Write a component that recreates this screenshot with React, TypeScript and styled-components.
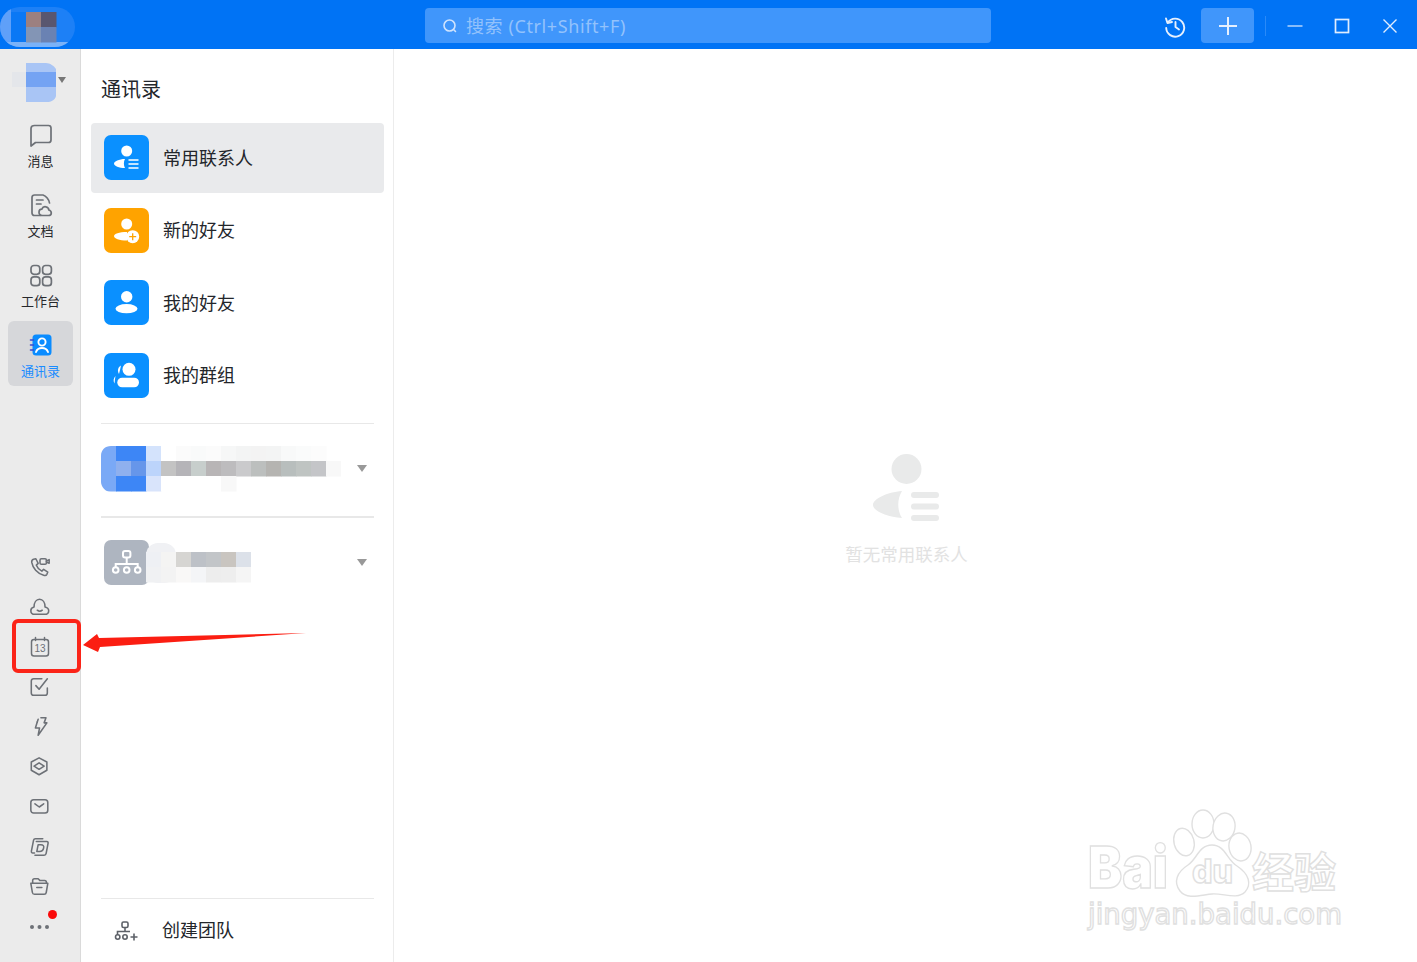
import React from 'react';
import styled, {createGlobalStyle} from 'styled-components';

const BLUE = '#0073f5';
const BLUE_SOFT = '#4096fb';
const RAIL_BG = '#ebebeb';
const LINE = '#e8e8e8';
const ICON = '#6d7177';
const TILE_BLUE = '#0a90ff';

const GlobalStyle = createGlobalStyle`
  html, body {
    margin: 0;
    padding: 0;
    background: #fff;
  }
  body {
    font-family: "Noto Sans", "Noto Sans CJK SC", sans-serif;
    color: #23262b;
  }
  * {
    box-sizing: border-box;
  }
`;

const Page = styled.div`
  position: relative;
  width: 1417px;
  height: 962px;
  overflow: hidden;
  display: flex;
  flex-direction: column;
`;

const TitleBar = styled.header`
  flex: none;
  height: 49px;
  background: ${BLUE};
  display: flex;
  align-items: flex-start;
  padding-right: 4px;
`;

const LogoSlot = styled.div`
  width: 425px;
  height: 49px;
  display: flex;
`;

const Search = styled.div`
  width: 566px;
  height: 35px;
  margin-top: 8px;
  border-radius: 4px;
  background: ${BLUE_SOFT};
  display: flex;
  align-items: center;
  gap: 7px;
  padding-left: 16px;
  color: #93c2fb;
  font-size: 18px;
  letter-spacing: 0.6px;
  white-space: nowrap;
`;

const SearchHint = styled.span`
  margin-top: -2px;
`;

const Actions = styled.div`
  margin: 8px 0 0 auto;
  display: flex;
  align-items: center;
`;

const ToolButton = styled.button<{$wide?: boolean}>`
  border: 0;
  padding: 0;
  height: 35px;
  width: ${(p) => (p.$wide ? '53px' : '28px')};
  margin-left: ${(p) => (p.$wide ? '12px' : '0')};
  border-radius: 4px;
  background: ${(p) => (p.$wide ? BLUE_SOFT : 'transparent')};
  display: flex;
  align-items: center;
  justify-content: center;
`;

const BarDivider = styled.span`
  width: 1px;
  height: 20px;
  margin: 0 5px 0 11px;
  background: #2a8af8;
`;

const WindowButtons = styled.div`
  display: flex;
  gap: 0.5px;
`;

const WindowButton = styled.button`
  border: 0;
  padding: 0;
  width: 47px;
  height: 35px;
  background: transparent;
  display: flex;
  align-items: center;
  justify-content: center;
`;

const Body = styled.div`
  flex: 1;
  min-height: 0;
  display: flex;
`;

const Rail = styled.nav`
  flex: none;
  width: 81px;
  background: ${RAIL_BG};
  border-right: 1px solid #dadada;
  display: flex;
  flex-direction: column;
  padding: 14px 0 15px;
`;

const RailAvatar = styled.div`
  height: 39px;
  margin: 0 0 9px 12px;
  display: flex;
`;

const RailTabs = styled.div`
  display: flex;
  flex-direction: column;
  gap: 5px;
`;

const RailTab = styled.div<{$active?: boolean}>`
  width: 65px;
  height: 65px;
  margin-left: 8px;
  border-radius: 6px;
  background: ${(p) => (p.$active ? '#d6d7da' : 'transparent')};
  color: ${(p) => (p.$active ? '#1a8cff' : '#26282c')};
  display: flex;
  flex-direction: column;
  align-items: center;
  padding-top: 12px;
  font-size: 13px;
  line-height: 18px;
  gap: 5px;
`;

const RailTools = styled.div`
  margin-top: auto;
  display: flex;
  flex-direction: column;
`;

const RailTool = styled.div`
  position: relative;
  height: 40px;
  display: flex;
  align-items: center;
  justify-content: center;
`;

const RedDot = styled.span`
  position: absolute;
  top: 3px;
  left: 48px;
  width: 9px;
  height: 9px;
  border-radius: 50%;
  background: #fa0a0a;
`;

const Panel = styled.aside`
  flex: none;
  width: 313px;
  border-right: 1px solid #ececec;
  padding: 27px 9px 0 10px;
  display: flex;
  flex-direction: column;
`;

const PanelTitle = styled.h1`
  margin: 0 0 19px 10px;
  font-size: 20px;
  font-weight: 400;
  line-height: 28px;
`;

const ContactList = styled.div`
  display: flex;
  flex-direction: column;
  gap: 2.5px;
  padding-bottom: 12.5px;
`;

const ContactRow = styled.div<{$active?: boolean}>`
  height: 70px;
  border-radius: 4px;
  padding-left: 13px;
  background: ${(p) => (p.$active ? '#e9eaec' : 'transparent')};
  display: flex;
  align-items: center;
  gap: 14px;
  font-size: 18px;
`;

const RowLabel = styled.span`
  margin-top: -3px;
`;

const Tile = styled.div<{$color: string}>`
  width: 45px;
  height: 45px;
  margin-top: -0.5px;
  border-radius: 7px;
  background: ${(p) => p.$color};
  display: flex;
`;

const Divider = styled.div<{$thick?: boolean}>`
  height: ${(p) => (p.$thick ? '2px' : '1px')};
  margin: 0 0 0 10px;
  width: 273px;
  background: ${LINE};
`;

const TeamRow = styled.div<{$top: number; $bottom: number}>`
  display: flex;
  align-items: center;
  justify-content: space-between;
  padding: ${(p) => p.$top}px 17px ${(p) => p.$bottom}px 10px;
`;

const TeamName = styled.div`
  display: flex;
  height: 45px;
`;

const GreyTile = styled(Tile)`
  margin-left: 3px;
  margin-top: 0;
  flex: none;
`;

const OrgName = styled.svg`
  margin-left: -3px;
`;

const Caret = styled.span`
  width: 0;
  height: 0;
  border-left: 5.5px solid transparent;
  border-right: 5.5px solid transparent;
  border-top: 7px solid #999;
`;

const PanelFooter = styled.div`
  margin-top: auto;
`;

const CreateTeam = styled.div`
  height: 63px;
  padding: 0 0 0 23px;
  display: flex;
  align-items: center;
  gap: 24px;
  font-size: 18px;
`;

const Main = styled.main`
  flex: 1;
  display: flex;
  flex-direction: column;
  align-items: center;
  padding: 405px 0 0 2px;
`;

const EmptyText = styled.div`
  margin-top: 20px;
  font-size: 17.5px;
  line-height: 24px;
  color: #e2e2e2;
`;

const Annotation = styled.div`
  position: absolute;
  left: 12px;
  top: 619px;
  width: 69px;
  height: 54px;
  border: 4px solid #fb2418;
  border-radius: 6px;
`;

const ArrowMark = styled.svg`
  position: absolute;
  left: 80px;
  top: 630px;
`;

const Watermark = styled.svg`
  position: absolute;
  left: 1085px;
  top: 808px;
`;

const Cells: React.FC<{rows: string[][]; x?: number; y?: number; w?: number; h?: number}> = ({
  rows,
  x = 0,
  y = 0,
  w = 15,
  h = 15,
}) => (
  <>
    {rows.map((row, r) =>
      row.map((c, i) => <rect key={`${r}-${i}`} x={x + i * w} y={y + r * h} width={w + 0.5} height={h + 0.5} fill={c} />),
    )}
  </>
);

const LogoMosaic = () => (
  <svg width="76" height="49" viewBox="0 0 76 49">
    <defs>
      <clipPath id="logoPill">
        <rect x="0" y="7" width="75" height="40" rx="20" />
      </clipPath>
    </defs>
    <g clipPath="url(#logoPill)">
      <rect x="0" y="7" width="75" height="40" fill="#1d80f6" />
      <rect x="0" y="7" width="11" height="40" fill="#5fa0f9" />
      <rect x="0" y="42" width="75" height="5" fill="#7ab2f8" />
    </g>
    <rect x="11" y="12" width="15" height="30" fill="#0a78f5" />
    <Cells x={26} y={12} rows={[['#9c8080', '#59566f'], ['#8395b5', '#6a82b3']]} />
  </svg>
);

const RailAvatarMosaic = () => (
  <svg width="56" height="39" viewBox="0 0 56 39">
    <rect x="0" y="9" width="14" height="15" fill="#e4e6ea" />
    <path d="M14 0H34C38 0 42 3 44 6V33C43 37 39 39 35 39H14Z" fill="#a9c5f5" />
    <rect x="14" y="9" width="30" height="15" fill="#74a3f3" />
    <path d="M46 14H54L50 20Z" fill="#777" />
  </svg>
);

const TeamMosaic = () => (
  <svg width="240" height="48" viewBox="0 0 240 48">
    <defs>
      <clipPath id="teamBadge">
        <path d="M10 0H60V46H10C4 46 0 40 0 36V10C0 4 4 0 10 0Z" />
        <rect x="60" y="0" width="180" height="48" />
      </clipPath>
    </defs>
    <g clipPath="url(#teamBadge)">
      <Cells
        rows={[
          ['#7aa9f6', '#3d86f6', '#3d86f6', '#d4e3fc', '#fff', '#fbfbfb', '#f9fafa', '#fbfbfb', '#f6f7f7', '#f3f4f4', '#f3f3f3', '#f3f4f4', '#f8f9f9', '#fafbfb', '#fcfcfc'],
          ['#7aa9f6', '#8fb0ee', '#6696ea', '#bcd4fb', '#c3c3c3', '#b5b4b8', '#c7cecc', '#b8b5b6', '#bdbcbe', '#cacacc', '#bcbfbe', '#b5b4b1', '#b8bebd', '#bfc4c2', '#c4c5c8', '#f8f8f8'],
          ['#7aa9f6', '#3d86f6', '#3d86f6', '#d9e4fb', '#fff', '#fff', '#fff', '#fff', '#f8f8f8'],
        ]}
      />
    </g>
  </svg>
);

const OrgMosaic = () => (
  <OrgName width="105" height="45" viewBox="0 0 105 45">
    <rect x="0" y="3" width="30" height="40" rx="12" fill="#f0f1f4" />
    <Cells
      y={12}
      rows={[
        ['#eef0f4', '#f4f4f3', '#d6d5d2', '#bdc1c7', '#c2c5c8', '#c9c5c0', '#dce1e9'],
        ['#f0f1f3', '#f3f3f3', '#f9f8f7', '#f4f5f7', '#ededed', '#eeeeee', '#f5f5f5'],
      ]}
    />
  </OrgName>
);

const TileBody = () => (
  <path d="M21 24C15 24 10 26.5 10 28.5C10 31 15 33 21 33C19.5 30.5 19.5 26.5 21 24Z" fill="#fff" />
);

const FrequentGlyph = () => (
  <svg width="45" height="45" viewBox="0 0 45 45">
    <circle cx="22.7" cy="16" r="5.5" fill="#fff" />
    <TileBody />
    <path d="M24.5 25H34.5M24.5 29H34.5M24.5 33H34.5" stroke="#fff" strokeWidth="1.6" />
  </svg>
);

const NewFriendGlyph = () => (
  <svg width="45" height="45" viewBox="0 0 45 45">
    <circle cx="22.7" cy="16" r="5.5" fill="#fff" />
    <path d="M23 24C15 24 10 26 10 28C10 30.5 15 32.5 23 32.5Z" fill="#fff" />
    <circle cx="28.7" cy="28.7" r="6.5" fill="#fff" />
    <path d="M28.7 25.2V32.2M25.2 28.7H32.2" stroke="#ffa300" strokeWidth="1.3" />
  </svg>
);

const FriendGlyph = () => (
  <svg width="45" height="45" viewBox="0 0 45 45">
    <circle cx="22.7" cy="16.7" r="5.7" fill="#fff" />
    <ellipse cx="22.5" cy="28.7" rx="11" ry="4.6" fill="#fff" />
  </svg>
);

const GroupGlyph = () => (
  <svg width="45" height="45" viewBox="0 0 45 45">
    <circle cx="25" cy="16.3" r="6.5" fill="#fff" />
    <rect x="13.3" y="24.7" width="21.7" height="9.6" rx="4.8" fill="#fff" />
    <path d="M17 12.5C14 14 13 18 15 21C15.8 18 16.5 15 17 12.5Z" fill="#fff" />
    <path d="M11.5 23C9.5 25 9 28 10.5 30.5C10.8 28 11 25.5 11.5 23Z" fill="#fff" />
  </svg>
);

const OrgGlyph = () => (
  <svg width="45" height="45" viewBox="0 0 45 45" fill="none" stroke="#fff" strokeWidth="2">
    <rect x="19" y="11" width="7.4" height="6.6" rx="2" />
    <path d="M22.7 17.6V24M11.7 27V24H33.7V27" />
    <circle cx="11.7" cy="30" r="2.8" />
    <circle cx="22.7" cy="30" r="2.8" />
    <circle cx="33.7" cy="30" r="2.8" />
  </svg>
);

const Line: React.FC<{size?: number; children: React.ReactNode}> = ({size = 24, children}) => (
  <svg
    width={size}
    height={size}
    viewBox="0 0 24 24"
    fill="none"
    stroke={ICON}
    strokeWidth="1.7"
    strokeLinecap="round"
    strokeLinejoin="round"
  >
    {children}
  </svg>
);

const ChatIcon = () => (
  <Line>
    <path d="M5.5 2.5H19.5C21 2.5 22 3.5 22 5V17C22 18.5 21 19.5 19.5 19.5H6.5L2 23V5.5C2 3.5 3.5 2.5 5.5 2.5Z" />
  </Line>
);

const DocIcon = () => (
  <Line>
    <path d="M11 22.5H5.5C4 22.5 3 21.5 3 20V4.5C3 3 4 2 5.5 2H14C17 3 20 6.5 20.5 10" />
    <path d="M7.5 7H14M7.5 11H12" />
    <path d="M13.5 22.5C11 22.5 10 20.8 10 19.2C10 17.5 11.3 16.2 12.8 16.2C13.6 14.3 15.2 13.5 16.8 13.8C18.8 14.2 19.8 15.7 19.8 17C21.2 17.4 22.3 18.5 22.3 20C22.3 21.5 21 22.5 19.5 22.5Z" />
  </Line>
);

const GridIcon = () => (
  <Line>
    <rect x="2" y="2.5" width="8.8" height="8.8" rx="3" />
    <rect x="13.6" y="2.5" width="8.8" height="8.8" rx="3" />
    <rect x="2" y="13.9" width="8.8" height="8.8" rx="3" />
    <rect x="13.6" y="13.9" width="8.8" height="8.8" rx="3" />
  </Line>
);

const ContactBookIcon = () => (
  <svg width="24" height="24" viewBox="0 0 24 24">
    <rect x="3.5" y="1.5" width="19" height="21" rx="3.5" fill="#0a8cff" />
    <path d="M1.5 7H4.5M1.5 12H4.5M1.5 17H4.5" stroke="#3a4bd0" strokeWidth="1.6" strokeLinecap="round" />
    <circle cx="13" cy="9" r="3.6" fill="none" stroke="#fff" strokeWidth="1.9" />
    <path d="M7 19C8 16 10 15 13 15C16 15 18 16 19 19" fill="none" stroke="#fff" strokeWidth="1.9" strokeLinecap="round" />
  </svg>
);

const CallIcon = () => (
  <Line size={22}>
    <path d="M5 3.5L7.5 3L10 8L8 10C9 12.5 11 15 14 16.5L16 14.5L20.5 17.5L19.5 20C19 21 17.5 21.5 16 21C9 19 4 13 3 7C2.8 5.5 3.5 4 5 3.5Z" />
    <rect x="12" y="3" width="7" height="6" rx="1.5" />
    <path d="M19 5.5L22 4V8L19 6.5" />
  </Line>
);

const CloudIcon = () => (
  <Line size={22}>
    <path d="M6.5 20C3.8 20 2 18.3 2 16C2 13.9 3.5 12.5 5.5 12C5.5 7 8 3.5 11.5 3.5C15 3.5 17.5 7 17.5 12C19.5 12.5 21.5 13.9 21.5 16C21.5 18.3 19.8 20 17 20Z" />
    <path d="M9 15.5C10.5 16.7 13 16.7 14.5 15.5" />
  </Line>
);

const CalendarIcon = () => (
  <svg width="22" height="22" viewBox="0 0 22 22" fill="none" stroke={ICON} strokeWidth="1.5" strokeLinecap="round">
    <rect x="2.5" y="3.5" width="17" height="16.5" rx="2.5" />
    <path d="M6.5 1.5V4.5M15.5 1.5V4.5" />
    <text x="11" y="16" textAnchor="middle" fontSize="10" fontFamily="Liberation Sans, sans-serif" fill={ICON} stroke="none">
      13
    </text>
  </svg>
);

const TaskIcon = () => (
  <Line size={22}>
    <path d="M14 3H5C3.5 3 2.5 4 2.5 5.5V18.5C2.5 20 3.5 21 5 21H17.5C19 21 20 20 20 18.5V13" />
    <path d="M7.5 10.5L11 14.5L20 3" />
  </Line>
);

const BoltIcon = () => (
  <Line size={22}>
    <path d="M13 2H18.5L16.5 7.5H19.5L10 21L11.5 13H7L9 6.5" />
    <path d="M9 6.5L10 3.5" />
  </Line>
);

const CubeIcon = () => (
  <Line size={22}>
    <path d="M11 2L19.5 6.5V15.5L11 20.5L2.5 15.5V6.5Z" />
    <path d="M11 7.5L16.5 11L11 14.5L5.5 11Z" />
  </Line>
);

const MailIcon = () => (
  <Line size={22}>
    <rect x="2" y="4" width="18.5" height="14.5" rx="3" />
    <path d="M6.5 8.5L11.2 12L16 8.5" />
  </Line>
);

const DraftIcon = () => (
  <Line size={22}>
    <path d="M6 18.5H4C3 18.5 2.3 17.5 2.6 16.5L5 4.5C5.2 3.5 6 3 7 3H15" />
    <path d="M8 6H19.5C20.5 6 21 6.8 20.8 8L18.7 19C18.5 20.2 17.7 21 16.5 21H6.5" />
    <path d="M10 9.5H13C15.5 9.5 16.5 11 16 13C15.5 15.5 14 17 11.5 17H8.5Z" />
  </Line>
);

const FolderIcon = () => (
  <Line size={22}>
    <path d="M4 8V5C4 3.8 4.8 3 6 3H10L12 5H17C18.2 5 19 5.8 19 7V8" />
    <path d="M2 8H20.5L18.8 18C18.6 19.3 17.8 20 16.5 20H6C4.7 20 3.9 19.3 3.7 18Z" />
    <path d="M8.5 12.5H14" />
  </Line>
);

const DotsIcon = () => (
  <svg width="22" height="6" viewBox="0 0 22 6">
    <circle cx="3" cy="3" r="2" fill={ICON} />
    <circle cx="10.5" cy="3" r="2" fill={ICON} />
    <circle cx="18" cy="3" r="2" fill={ICON} />
  </svg>
);

const SearchGlyph = () => (
  <svg width="18" height="18" viewBox="0 0 18 18" fill="none" stroke="#cfe3fd" strokeWidth="1.6" strokeLinecap="round">
    <circle cx="8.5" cy="8.5" r="5.5" />
    <path d="M12.8 12.8L14.5 14.5" />
  </svg>
);

const HistoryGlyph = () => (
  <svg width="24" height="24" viewBox="0 0 24 24" fill="none" stroke="#e6f0fe" strokeWidth="1.9" strokeLinecap="round" strokeLinejoin="round">
    <path d="M4.8 8.5A9 9 0 1 1 3.2 14" />
    <path d="M3 4.5L4.5 9L9 8" />
    <path d="M12.5 8V13L16 15.5" />
  </svg>
);

const PlusGlyph = () => (
  <svg width="20" height="20" viewBox="0 0 20 20" stroke="#e6f0fe" strokeWidth="2">
    <path d="M10 1V19M1 10H19" />
  </svg>
);

const MinGlyph = () => (
  <svg width="16" height="16" viewBox="0 0 16 16" stroke="#e1edfe" strokeWidth="1.2">
    <path d="M0.5 8H15.5" />
  </svg>
);

const MaxGlyph = () => (
  <svg width="16" height="16" viewBox="0 0 16 16" fill="none" stroke="#e1edfe" strokeWidth="1.7">
    <rect x="1.5" y="1.5" width="13" height="13" />
  </svg>
);

const CloseGlyph = () => (
  <svg width="16" height="16" viewBox="0 0 16 16" stroke="#e1edfe" strokeWidth="1.4">
    <path d="M1.5 1.5L14.5 14.5M14.5 1.5L1.5 14.5" />
  </svg>
);

const NewTeamIcon = () => (
  <svg width="24" height="24" viewBox="0 0 24 24" fill="none" stroke="#5d6168" strokeWidth="1.6">
    <rect x="8" y="3" width="6" height="5.5" rx="1.5" />
    <path d="M11 8.5V12.5M3.5 16V12.5H16" />
    <circle cx="3.7" cy="18" r="2.2" />
    <circle cx="11" cy="18" r="2.2" />
    <path d="M16.5 18H23.5M20 14.5V21.5" />
  </svg>
);

const EmptyGlyph = () => (
  <svg width="68" height="68" viewBox="0 0 68 68" fill="#e9eaea">
    <circle cx="33.5" cy="15" r="15" />
    <path d="M29 37C14 38 0 45 0 51C0 57 14 63 29 64C24 56 24 45 29 37Z" />
    <rect x="38" y="38" width="28" height="6" rx="3" />
    <rect x="38" y="49.5" width="28" height="6" rx="3" />
    <rect x="38" y="61" width="28" height="6" rx="3" />
  </svg>
);

const tabs = [
  {label: '消息', icon: <ChatIcon />},
  {label: '文档', icon: <DocIcon />},
  {label: '工作台', icon: <GridIcon />},
  {label: '通讯录', icon: <ContactBookIcon />, active: true},
];

const tools = [
  <CallIcon key="call" />,
  <CloudIcon key="cloud" />,
  <CalendarIcon key="calendar" />,
  <TaskIcon key="task" />,
  <BoltIcon key="bolt" />,
  <CubeIcon key="cube" />,
  <MailIcon key="mail" />,
  <DraftIcon key="draft" />,
  <FolderIcon key="folder" />,
];

const contacts = [
  {label: '常用联系人', color: TILE_BLUE, glyph: <FrequentGlyph />, active: true},
  {label: '新的好友', color: '#ffa300', glyph: <NewFriendGlyph />},
  {label: '我的好友', color: TILE_BLUE, glyph: <FriendGlyph />},
  {label: '我的群组', color: TILE_BLUE, glyph: <GroupGlyph />},
];

const App = () => (
  <Page>
    <GlobalStyle />
    <TitleBar>
      <LogoSlot>
        <LogoMosaic />
      </LogoSlot>
      <Search>
        <SearchGlyph />
        <SearchHint>搜索 (Ctrl+Shift+F)</SearchHint>
      </Search>
      <Actions>
        <ToolButton>
          <HistoryGlyph />
        </ToolButton>
        <ToolButton $wide>
          <PlusGlyph />
        </ToolButton>
        <BarDivider />
        <WindowButtons>
          <WindowButton>
            <MinGlyph />
          </WindowButton>
          <WindowButton>
            <MaxGlyph />
          </WindowButton>
          <WindowButton>
            <CloseGlyph />
          </WindowButton>
        </WindowButtons>
      </Actions>
    </TitleBar>
    <Body>
      <Rail>
        <RailAvatar>
          <RailAvatarMosaic />
        </RailAvatar>
        <RailTabs>
          {tabs.map((t) => (
            <RailTab key={t.label} $active={t.active}>
              {t.icon}
              <span>{t.label}</span>
            </RailTab>
          ))}
        </RailTabs>
        <RailTools>
          {tools.map((icon) => (
            <RailTool key={icon.key}>{icon}</RailTool>
          ))}
          <RailTool>
            <DotsIcon />
            <RedDot />
          </RailTool>
        </RailTools>
      </Rail>
      <Panel>
        <PanelTitle>通讯录</PanelTitle>
        <ContactList>
          {contacts.map((c) => (
            <ContactRow key={c.label} $active={c.active}>
              <Tile $color={c.color}>{c.glyph}</Tile>
              <RowLabel>{c.label}</RowLabel>
            </ContactRow>
          ))}
        </ContactList>
        <Divider />
        <TeamRow $top={22} $bottom={25}>
          <TeamName>
            <TeamMosaic />
          </TeamName>
          <Caret />
        </TeamRow>
        <Divider $thick />
        <TeamRow $top={22} $bottom={0}>
          <TeamName>
            <GreyTile $color="#aeb5c0">
              <OrgGlyph />
            </GreyTile>
            <OrgMosaic />
          </TeamName>
          <Caret />
        </TeamRow>
        <PanelFooter>
          <Divider />
          <CreateTeam>
            <NewTeamIcon />
            <RowLabel>创建团队</RowLabel>
          </CreateTeam>
        </PanelFooter>
      </Panel>
      <Main>
        <EmptyGlyph />
        <EmptyText>暂无常用联系人</EmptyText>
      </Main>
    </Body>
    <Annotation />
    <ArrowMark width="230" height="26" viewBox="0 0 230 26">
      <path d="M3 15L17 4L19 8L226 3L20 17L18 22Z" fill="#fb1e12" />
    </ArrowMark>
    <Watermark width="262" height="128" viewBox="0 0 262 128" fill="#fff" stroke="#e0e0e0" strokeWidth="1.4">
      <ellipse cx="99" cy="34" rx="10" ry="14" transform="rotate(-15 99 34)" />
      <ellipse cx="118" cy="16" rx="11" ry="14" />
      <ellipse cx="139" cy="19" rx="11" ry="14" transform="rotate(10 139 19)" />
      <ellipse cx="155" cy="39" rx="11" ry="14" transform="rotate(-10 155 39)" />
      <path d="M127 37C140 37 142 52 152 58C164 66 167 76 160 84C152 92 138 85 127 86C116 87 102 92 95 83C88 74 92 64 103 57C112 51 114 37 127 37Z" />
      <g fontFamily="Inter, sans-serif">
        <text x="3" y="80" fontSize="58" fontWeight="900" textLength="80" lengthAdjust="spacingAndGlyphs">
          Bai
        </text>
        <text x="107" y="75" fontSize="32" fontWeight="800" textLength="41" lengthAdjust="spacingAndGlyphs">
          du
        </text>
        <text x="167" y="80" fontSize="42" fontFamily="Noto Sans CJK SC, sans-serif" fontWeight="700">
          经验
        </text>
        <text x="3" y="116" fontSize="28" fontFamily="DejaVu Sans, sans-serif" textLength="254" lengthAdjust="spacingAndGlyphs">
          jingyan.baidu.com
        </text>
      </g>
    </Watermark>
  </Page>
);

export default App;
